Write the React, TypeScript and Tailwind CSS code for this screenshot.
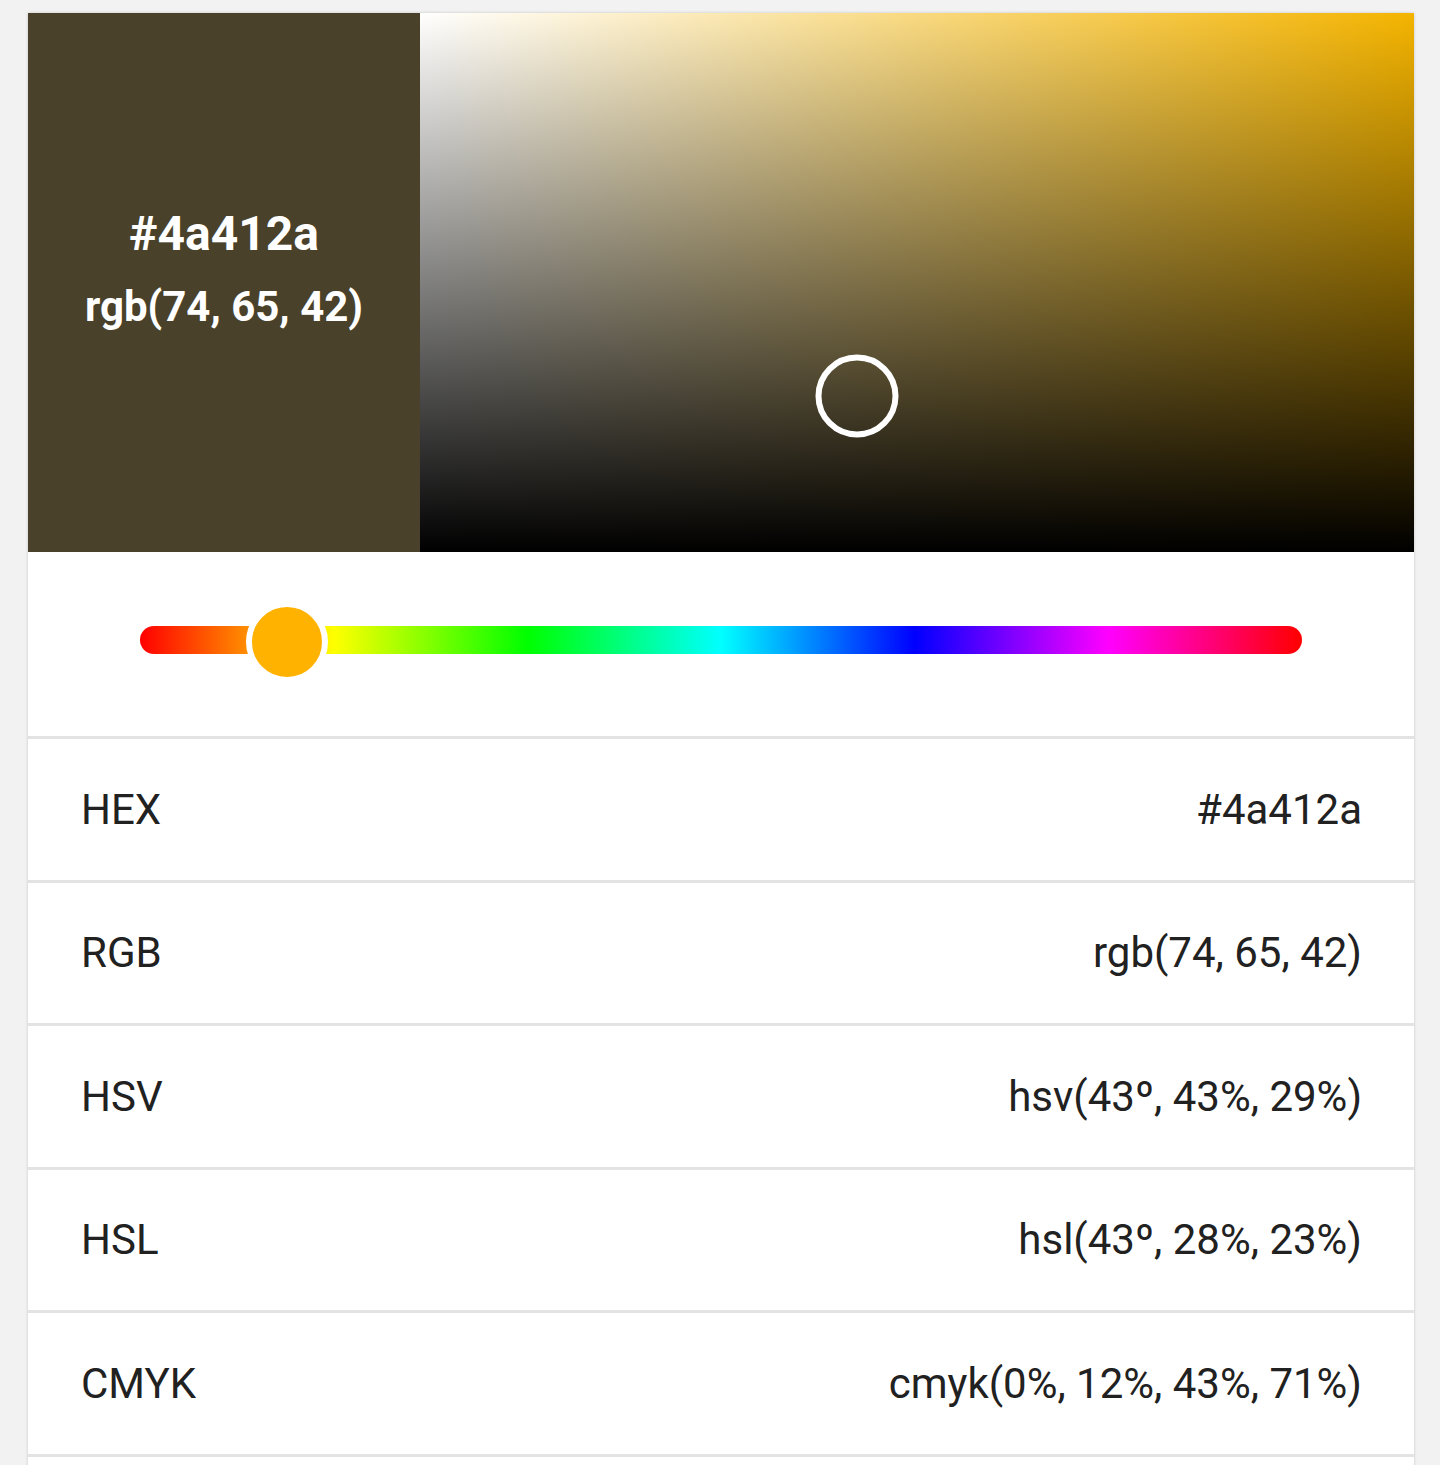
import React from "react";

const rows: [string, string][] = [
  ["HEX", "#4a412a"],
  ["RGB", "rgb(74, 65, 42)"],
  ["HSV", "hsv(43º, 43%, 29%)"],
  ["HSL", "hsl(43º, 28%, 23%)"],
  ["CMYK", "cmyk(0%, 12%, 43%, 71%)"],
  ["", ""],
];

export default function App() {
  return (
    <div className="min-h-[1465px] bg-[#f2f2f2] pt-[13px] font-['Roboto',sans-serif]">
      <div className="ml-[28px] w-[1386px] bg-white shadow-[0_0_3px_rgba(0,0,0,0.18)]">
        <div className="flex h-[539px]">
          <div className="flex w-[392px] flex-col items-center justify-center bg-[#4a412a] pb-[28px] text-white">
            <div className="text-[48px] font-bold leading-[56px]">#4a412a</div>
            <div className="mt-[20px] text-[42px] font-bold leading-[50px]">rgb(74, 65, 42)</div>
          </div>
          <div className="relative flex-1 [background-image:linear-gradient(to_top,#000,rgba(0,0,0,0)),linear-gradient(to_right,#fff,#f4b400)]">
            <div className="absolute left-[44%] top-[71%] h-[83px] w-[83px] -translate-x-1/2 -translate-y-1/2 rounded-full border-[6px] border-white" />
          </div>
        </div>
        <div className="flex h-[184px] items-start px-[112px] pt-[74px]">
          <div className="relative h-[28px] w-full rounded-full bg-[linear-gradient(to_right,#ff0000,#ffff00_16.67%,#00ff00_33.33%,#00ffff_50%,#0000ff_66.67%,#ff00ff_83.33%,#ff0000)]">
            <div className="absolute left-[147px] top-[calc(50%+2px)] h-[82px] w-[82px] -translate-x-1/2 -translate-y-1/2 rounded-full border-[6px] border-white bg-[#ffb300]" />
          </div>
        </div>
        {rows.map(([k, v], i) => (
          <div
            key={i}
            className="flex h-[143.5px] items-center justify-between border-t-[3px] border-[#e3e3e3] pl-[53px] pr-[52px] text-[42px] text-[#212121]"
          >
            <span>{k}</span>
            <span>{v}</span>
          </div>
        ))}
      </div>
    </div>
  );
}
